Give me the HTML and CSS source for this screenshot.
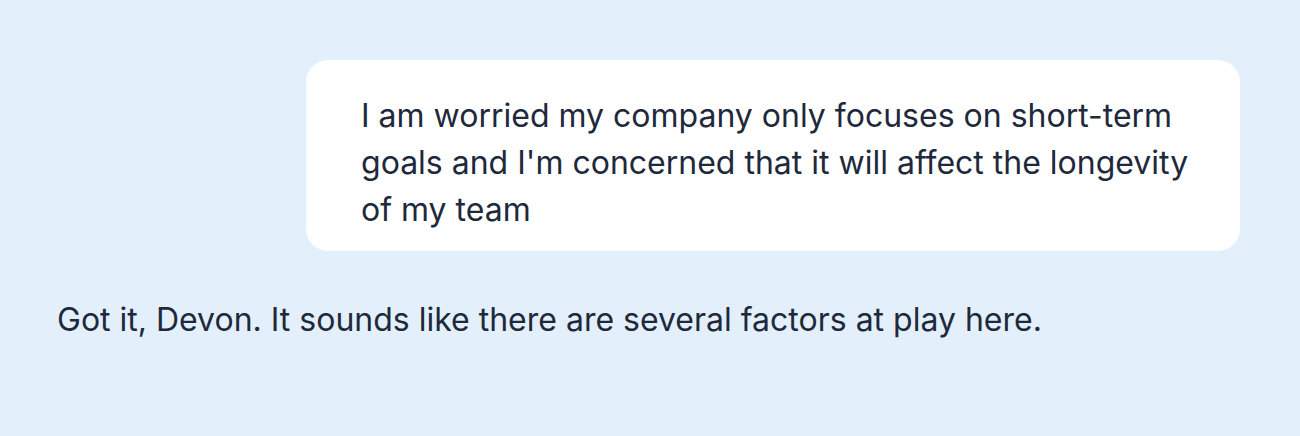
FILE: index.html
```html
<!DOCTYPE html>
<html lang="en">
<head>
    <meta charset="UTF-8">
    <meta name="viewport" content="width=device-width, initial-scale=1.0">
    <title>Chat</title>
    <link rel="stylesheet" href="styles.css">
</head>
<body>
    <div class="chat">
        <div class="message user">
            <p class="bubble">I am worried my company only focuses on short-term goals and I'm concerned that it will affect the longevity of my team</p>
        </div>
        <div class="message bot">
            <p>Got it, Devon. It sounds like there are several factors at play here.</p>
        </div>
    </div>
</body>
</html>
```

FILE: styles.css
```css
body {
    margin: 0;
    background-color: #e3f0fb;
    font-family: Inter, "Noto Sans", sans-serif;
    color: #1e293b;
    height: 100vh;
}
.chat {
    padding: 60px 60px 0 57px;
    display: flex;
    flex-direction: column;
}
.message p {
    margin: 0;
    font-size: 32px;
    line-height: 47px;
}
.user {
    display: flex;
    justify-content: flex-end;
}
.bubble {
    background: #fff;
    border-radius: 22px;
    width: 934px;
    box-sizing: border-box;
    padding: 32px 40px 18px 55px;
}
.bot {
    margin-top: 45px;
}
```
